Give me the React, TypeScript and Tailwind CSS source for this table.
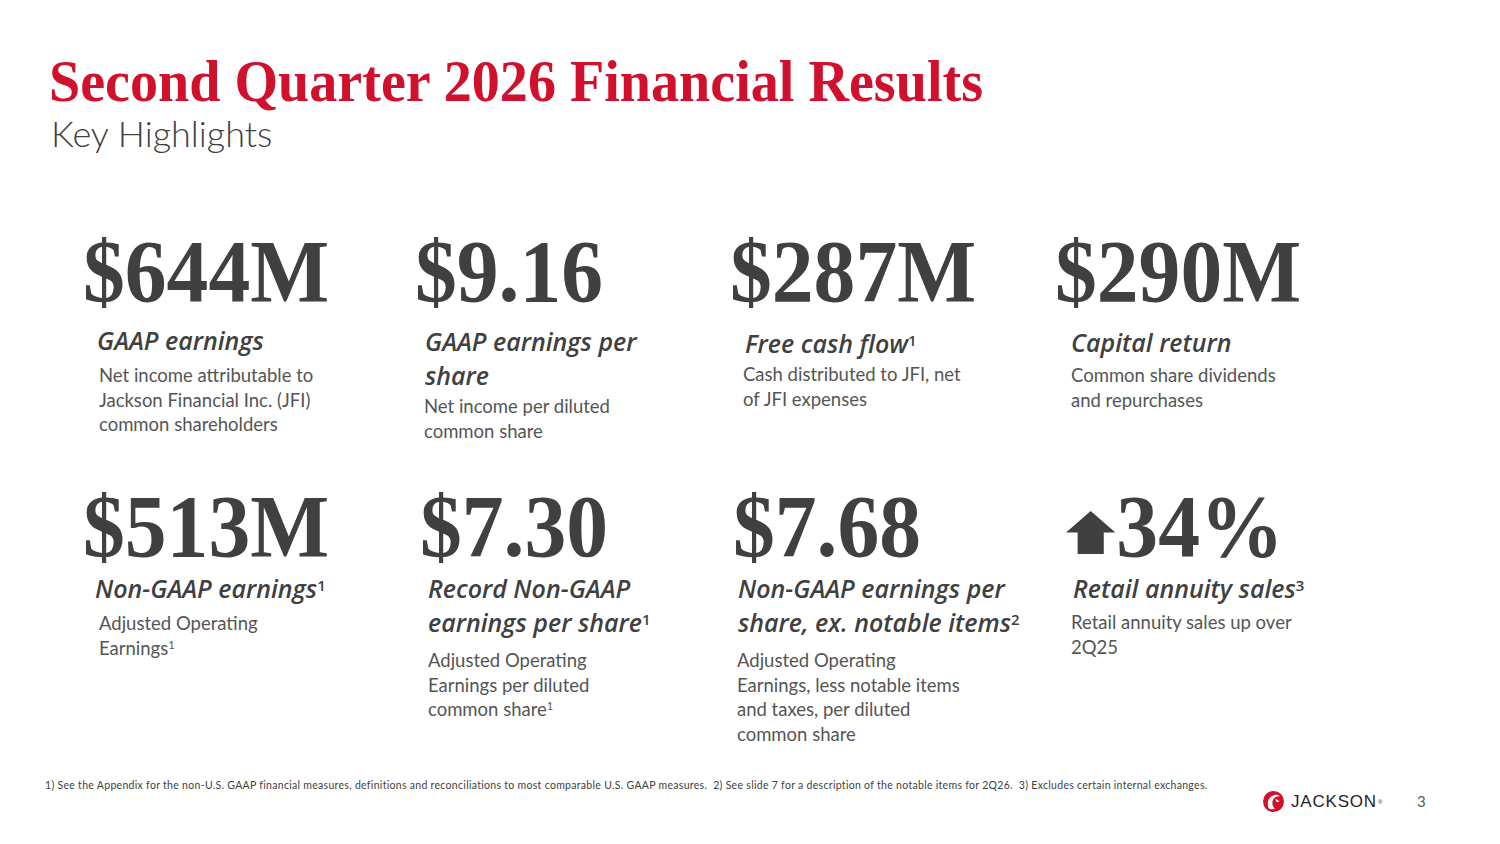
import type { ReactNode } from 'react'

// Slide 3 of the 2Q26 deck: title, then a 4x2 grid of headline metrics.

interface Metric {
    value: ReactNode
    label: ReactNode
    desc: ReactNode
    valueCls: string
    labelCls: string
    descCls: string
}

const Sup = ({ n }: { n: number }) => (
    <sup className="text-[0.6em] not-italic">{n}</sup>
)

function UpArrow() {
    return (
        <svg
            width="52"
            height="43"
            viewBox="0 0 51 42"
            className="mb-[13px] mr-[1px] shrink-0"
        >
            <polygon
                points="25.5,0 51,21 39,21 39,42 12,42 12,21 0,21"
                fill="#404040"
            />
        </svg>
    )
}

const topRow: Metric[] = [
    {
        value: '$644M',
        label: 'GAAP earnings',
        desc: (
            <>
                Net income attributable to
                <br />
                Jackson Financial Inc. (JFI)
                <br />
                common shareholders
            </>
        ),
        valueCls: 'ml-0',
        labelCls: 'ml-[14px] mt-[11px]',
        descCls: 'ml-[16px] mt-[6px]',
    },
    {
        value: '$9.16',
        label: (
            <>
                GAAP earnings per
                <br />
                share
            </>
        ),
        desc: (
            <>
                Net income per diluted
                <br />
                common share
            </>
        ),
        valueCls: 'ml-0',
        labelCls: 'ml-[10px] mt-[12px]',
        descCls: 'ml-[9px] mt-[2px]',
    },
    {
        value: '$287M',
        label: (
            <>
                Free cash flow
                <Sup n={1} />
            </>
        ),
        desc: (
            <>
                Cash distributed to JFI, net
                <br />
                of JFI expenses
            </>
        ),
        valueCls: 'ml-0',
        labelCls: 'ml-[15px] mt-[14px]',
        descCls: 'ml-[13px] mt-[2px]',
    },
    {
        value: '$290M',
        label: 'Capital return',
        desc: (
            <>
                Common share dividends
                <br />
                and repurchases
            </>
        ),
        valueCls: 'ml-0',
        labelCls: 'ml-[16px] mt-[13px]',
        descCls: 'ml-[16px] mt-[4px]',
    },
]

const bottomRow: Metric[] = [
    {
        value: '$513M',
        label: (
            <>
                Non-GAAP earnings
                <Sup n={1} />
            </>
        ),
        desc: (
            <>
                Adjusted Operating
                <br />
                Earnings
                <Sup n={1} />
            </>
        ),
        valueCls: 'ml-0',
        labelCls: 'ml-[12px] mt-[4px]',
        descCls: 'ml-[16px] mt-[6px]',
    },
    {
        value: '$7.30',
        label: (
            <>
                Record Non-GAAP
                <br />
                earnings per share
                <Sup n={1} />
            </>
        ),
        desc: (
            <>
                Adjusted Operating
                <br />
                Earnings per diluted
                <br />
                common share
                <Sup n={1} />
            </>
        ),
        valueCls: 'ml-[5px]',
        labelCls: 'ml-[13px] mt-[4px]',
        descCls: 'ml-[13px] mt-[9px]',
    },
    {
        value: '$7.68',
        label: (
            <>
                Non-GAAP earnings per
                <br />
                share, ex. notable items
                <Sup n={2} />
            </>
        ),
        desc: (
            <>
                Adjusted Operating
                <br />
                Earnings, less notable items
                <br />
                and taxes, per diluted
                <br />
                common share
            </>
        ),
        valueCls: 'ml-[3px]',
        labelCls: 'ml-[8px] mt-[4px]',
        descCls: 'ml-[7px] mt-[9px]',
    },
    {
        value: (
            <span className="flex items-end">
                <UpArrow />
                34%
            </span>
        ),
        label: (
            <>
                Retail annuity sales
                <Sup n={3} />
            </>
        ),
        desc: (
            <>
                Retail annuity sales up over
                <br />
                2Q25
            </>
        ),
        valueCls: 'ml-[11px]',
        labelCls: 'ml-[18px] mt-[4px]',
        descCls: 'ml-[16px] mt-[5px]',
    },
]

function MetricCard({ m }: { m: Metric }) {
    return (
        <div className="flex flex-col pt-[9px]">
            <div
                className={`${m.valueCls} h-[80px] origin-left scale-x-[0.95] font-['Liberation_Serif',serif] text-[88px] font-bold leading-[80px] text-[#404040]`}
            >
                {m.value}
            </div>
            <div
                className={`${m.labelCls} font-['Open_Sans',sans-serif] text-[25px] font-semibold italic leading-[34px] text-[#404040]`}
            >
                {m.label}
            </div>
            <div
                className={`${m.descCls} text-[18.5px] leading-[24.5px] text-[#555555]`}
            >
                {m.desc}
            </div>
        </div>
    )
}

function JacksonLogo() {
    return (
        <div className="flex items-center gap-[7px]">
            <svg width="21" height="21" viewBox="0 0 20 20">
                <circle cx="10" cy="10" r="10" fill="#d0102c" />
                <path
                    d="M5.6 16.6 C3.4 12.4 4.4 6.4 9.6 4.2 C12 3.2 14.6 3.6 16 5 C12.6 4.8 9.4 6.8 9 10.4 C8.7 13 9.6 15.2 11.2 16.8 C9.4 17.6 7.2 17.6 5.6 16.6 Z"
                    fill="#ffffff"
                />
                <path
                    d="M11.4 8.2 C13 7.6 14.8 8.4 15.4 10 L13.2 10.6 C12.8 9.6 12 9 11.4 8.2 Z"
                    fill="#ffffff"
                />
            </svg>
            <span className="font-['Liberation_Sans',sans-serif] text-[17px] leading-none tracking-[0.8px] text-[#2a1c2c]">
                JACKSON
                <sup className="ml-[1px] text-[6px]">®</sup>
            </span>
        </div>
    )
}

export default function App() {
    return (
        <div className="relative h-[844px] w-[1500px] overflow-hidden bg-white font-['Lato',sans-serif]">
            <div className="pl-[49px] pt-[49px]">
                <h1 className="origin-left scale-x-[0.935] whitespace-nowrap font-['Liberation_Serif',serif] text-[60px] font-bold leading-[64px] text-[#d0102c]">
                    Second Quarter 2026 Financial Results
                </h1>
                <h2 className="ml-[2px] mt-[-2px] text-[36px] font-light leading-[44px] text-[#404040]">
                    Key Highlights
                </h2>
            </div>

            <div className="mt-[68px] grid grid-cols-[332px_315px_325px_330px] grid-rows-[255px_auto] pl-[83px]">
                {topRow.map((m, i) => (
                    <MetricCard key={`t${i}`} m={m} />
                ))}
                {bottomRow.map((m, i) => (
                    <MetricCard key={`b${i}`} m={m} />
                ))}
            </div>

            <p className="absolute left-[45px] top-[779px] whitespace-nowrap text-[10.5px] leading-[13px] tracking-[0.3px] text-[#404040]">
                1) See the Appendix for the non-U.S. GAAP financial measures,
                definitions and reconciliations to most comparable U.S. GAAP
                measures.&nbsp; 2) See slide 7 for a description of the notable
                items for 2Q26.&nbsp; 3) Excludes certain internal exchanges.
            </p>

            <div className="absolute left-[1263px] top-[791px]">
                <JacksonLogo />
            </div>
            <span className="absolute left-[1417px] top-[790px] text-[15px] text-[#595959]">
                3
            </span>
        </div>
    )
}
